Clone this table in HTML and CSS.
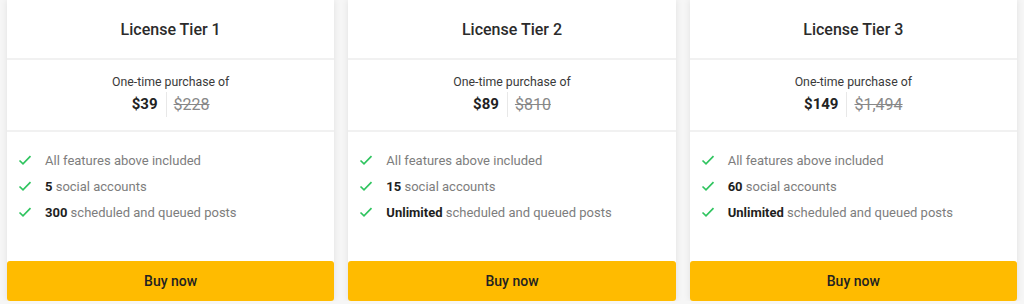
FILE: index.html
```html
<!DOCTYPE html>
<html lang="en">
<head>
    <meta charset="UTF-8">
    <meta name="viewport" content="width=device-width, initial-scale=1.0">
    <title>License Tiers</title>
    <link rel="stylesheet" href="styles.css">
</head>
<body>
    <div class="tiers">
        <div class="tier">
            <div class="tier-head">License Tier 1</div>
            <div class="tier-price">
                <div class="price-label">One-time purchase of</div>
                <div class="price-row">
                    <span class="price-now">$39</span>
                    <span class="price-sep"></span>
                    <span class="price-old">$228</span>
                </div>
            </div>
            <ul class="features">
                <li><svg class="check" viewBox="0 0 14 14"><path d="M1.5 7.5 L5 10.8 L12.5 3.2"/></svg><span>All features above included</span></li>
                <li><svg class="check" viewBox="0 0 14 14"><path d="M1.5 7.5 L5 10.8 L12.5 3.2"/></svg><span><b>5</b> social accounts</span></li>
                <li><svg class="check" viewBox="0 0 14 14"><path d="M1.5 7.5 L5 10.8 L12.5 3.2"/></svg><span><b>300</b> scheduled and queued posts</span></li>
            </ul>
            <button class="buy">Buy now</button>
        </div>

        <div class="tier">
            <div class="tier-head">License Tier 2</div>
            <div class="tier-price">
                <div class="price-label">One-time purchase of</div>
                <div class="price-row">
                    <span class="price-now">$89</span>
                    <span class="price-sep"></span>
                    <span class="price-old">$810</span>
                </div>
            </div>
            <ul class="features">
                <li><svg class="check" viewBox="0 0 14 14"><path d="M1.5 7.5 L5 10.8 L12.5 3.2"/></svg><span>All features above included</span></li>
                <li><svg class="check" viewBox="0 0 14 14"><path d="M1.5 7.5 L5 10.8 L12.5 3.2"/></svg><span><b>15</b> social accounts</span></li>
                <li><svg class="check" viewBox="0 0 14 14"><path d="M1.5 7.5 L5 10.8 L12.5 3.2"/></svg><span><b>Unlimited</b> scheduled and queued posts</span></li>
            </ul>
            <button class="buy">Buy now</button>
        </div>

        <div class="tier">
            <div class="tier-head">License Tier 3</div>
            <div class="tier-price">
                <div class="price-label">One-time purchase of</div>
                <div class="price-row">
                    <span class="price-now">$149</span>
                    <span class="price-sep"></span>
                    <span class="price-old">$1,494</span>
                </div>
            </div>
            <ul class="features">
                <li><svg class="check" viewBox="0 0 14 14"><path d="M1.5 7.5 L5 10.8 L12.5 3.2"/></svg><span>All features above included</span></li>
                <li><svg class="check" viewBox="0 0 14 14"><path d="M1.5 7.5 L5 10.8 L12.5 3.2"/></svg><span><b>60</b> social accounts</span></li>
                <li><svg class="check" viewBox="0 0 14 14"><path d="M1.5 7.5 L5 10.8 L12.5 3.2"/></svg><span><b>Unlimited</b> scheduled and queued posts</span></li>
            </ul>
            <button class="buy">Buy now</button>
        </div>
    </div>
</body>
</html>
```
FILE: styles.css
```css
body {
    margin: 0;
    font-family: Roboto, "Liberation Sans", Arial, sans-serif;
    background-color: #f6f6f6;
    color: #222;
}
.tiers {
    display: grid;
    grid-template-columns: repeat(3, 1fr);
    gap: 14px;
    padding: 0 7px;
}
.tier {
    background: white;
    border-radius: 0 0 4px 4px;
    box-shadow: 0 0 7px rgba(0,0,0,0.09);
    display: flex;
    flex-direction: column;
}
.tier-head {
    text-align: center;
    font-size: 16px;
    font-weight: 500;
    line-height: 20px;
    color: #2b2b2b;
    padding: 20px 0 18px;
    border-bottom: 2px solid #f1f1f1;
}
.tier-price {
    text-align: center;
    padding: 13px 0 13px;
    border-bottom: 2px solid #f1f1f1;
}
.price-label {
    font-size: 12.3px;
    line-height: 18px;
    color: #3a3a3a;
}
.price-row {
    display: flex;
    justify-content: center;
    align-items: center;
    height: 26px;
}
.price-now {
    font-size: 15px;
    font-weight: 700;
    color: #222;
}
.price-sep {
    width: 1px;
    height: 25px;
    background-color: #e8e8e8;
    margin: 0 7px 0 8px;
}
.price-old {
    font-size: 16px;
    color: #888;
    text-decoration: line-through;
}
.features {
    list-style: none;
    margin: 0;
    padding: 15px 11px 36px;
}
.features li {
    display: flex;
    align-items: center;
    height: 26px;
    font-size: 13px;
    color: #7d7d7d;
}
.features b {
    color: #1e1e1e;
    font-weight: 700;
}
.check {
    width: 14px;
    height: 14px;
    margin-right: 13px;
    fill: none;
    stroke: #2fc45f;
    stroke-width: 1.7;
}
.buy {
    height: 40px;
    border: none;
    border-radius: 3px;
    background-color: #ffbb00;
    color: #222;
    font-family: inherit;
    font-size: 14px;
    font-weight: 500;
    cursor: pointer;
}
.buy:hover {
    background-color: #f5b000;
}
```
